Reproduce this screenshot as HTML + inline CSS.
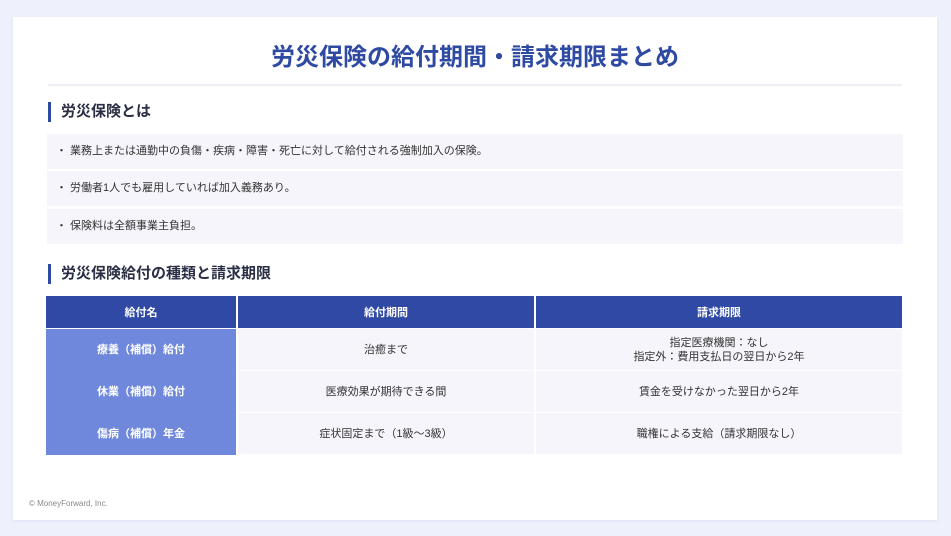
<!DOCTYPE html>
<html><head><meta charset="utf-8"><style>
*{margin:0;padding:0;box-sizing:border-box}
body{width:951px;height:536px;background:#eef1fb;font-family:"Liberation Sans","Noto Sans CJK JP",sans-serif;position:relative;overflow:hidden}
.card{position:absolute;left:13px;top:17px;width:924px;height:503px;background:#fff;box-shadow:0 1px 4px rgba(40,60,140,.08)}
h1{position:absolute;left:0;width:100%;top:25px;text-align:center;font-size:24px;font-weight:700;color:#2f4aa3;line-height:32px}
.rule{position:absolute;left:35px;width:854px;top:67px;height:2px;background:#eef0f8}
h2{position:absolute;left:35px;font-size:15px;font-weight:700;color:#2a2f45;border-left:3px solid #2f4aa3;padding-left:10px;line-height:20px}
.b{position:absolute;left:34px;width:856px;height:35px;background:#f5f5fb;font-size:11px;color:#333;line-height:35px;padding-left:9px}
table{position:absolute;left:31px;top:279px;width:860px;border-collapse:separate;border-spacing:2px 0;font-size:11px;table-layout:fixed}
td,th{text-align:center;vertical-align:middle}
th{background:#3049a4;color:#fff;height:33px;font-weight:700;border-bottom:1px solid #fff}
td{height:42px;background:#f5f5fb;color:#333;border-bottom:1px solid #fff;line-height:14px}
td.n{background:#6f88db;color:#fff;font-weight:700;border-bottom:none}
.f{position:absolute;left:16px;top:482px;font-size:8px;color:#888}
</style></head><body><div class="card">
<h1>労災保険の給付期間・請求期限まとめ</h1>
<div class="rule"></div>
<h2 style="top:85px">労災保険とは</h2>
<div class="b" style="top:117px">・ 業務上または通勤中の負傷・疾病・障害・死亡に対して給付される強制加入の保険。</div>
<div class="b" style="top:154px">・ 労働者1人でも雇用していれば加入義務あり。</div>
<div class="b" style="top:192px">・ 保険料は全額事業主負担。</div>
<h2 style="top:247px">労災保険給付の種類と請求期限</h2>
<table><colgroup><col style="width:190px"><col style="width:296px"><col></colgroup>
<tr><th>給付名</th><th>給付期間</th><th>請求期限</th></tr>
<tr><td class="n">療養（補償）給付</td><td>治癒まで</td><td>指定医療機関：なし<br>指定外：費用支払日の翌日から2年</td></tr>
<tr><td class="n">休業（補償）給付</td><td>医療効果が期待できる間</td><td>賃金を受けなかった翌日から2年</td></tr>
<tr><td class="n">傷病（補償）年金</td><td>症状固定まで（1級〜3級）</td><td>職権による支給（請求期限なし）</td></tr>
</table>
<div class="f">© MoneyForward, Inc.</div>
</div></body></html>
